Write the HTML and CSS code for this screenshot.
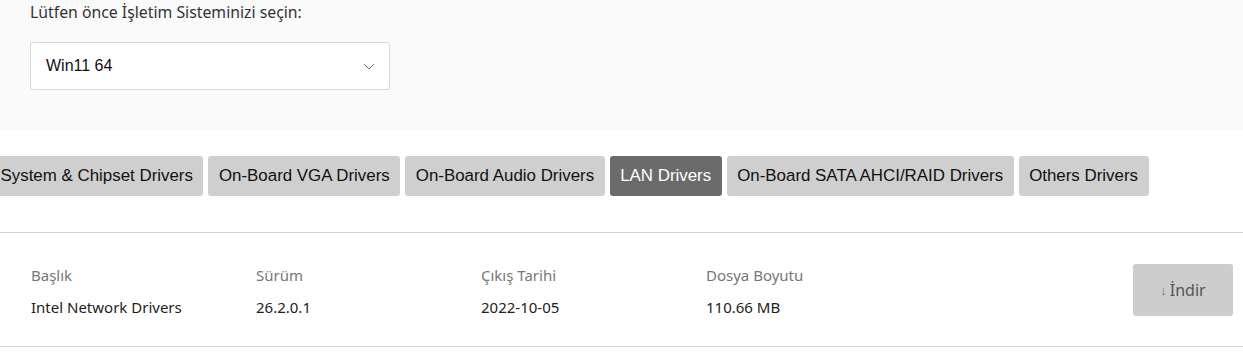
FILE: index.html
```html
<!DOCTYPE html>
<html lang="tr">
<head>
<meta charset="utf-8">
<link rel="stylesheet" href="styles.css">
</head>
<body>
<section class="os">
  <div class="os-label">Lütfen önce İşletim Sisteminizi seçin:</div>
  <div class="select">
    <span>Win11 64</span>
    <svg class="chev" width="12" height="7" viewBox="0 0 12 7"><path d="M1 1 L6 6 L11 1" fill="none" stroke="#777" stroke-width="1"/></svg>
  </div>
</section>
<nav class="tabs">
  <div class="tab">System &amp; Chipset Drivers</div>
  <div class="tab">On-Board VGA Drivers</div>
  <div class="tab">On-Board Audio Drivers</div>
  <div class="tab active">LAN Drivers</div>
  <div class="tab">On-Board SATA AHCI/RAID Drivers</div>
  <div class="tab">Others Drivers</div>
</nav>
<div class="list">
  <div class="row">
    <div class="col"><div class="h">Başlık</div><div class="v">Intel Network Drivers</div></div>
    <div class="col"><div class="h">Sürüm</div><div class="v">26.2.0.1</div></div>
    <div class="col"><div class="h">Çıkış Tarihi</div><div class="v">2022-10-05</div></div>
    <div class="col"><div class="h">Dosya Boyutu</div><div class="v">110.66 MB</div></div>
    <div class="spacer"></div>
    <button class="dl"><span class="arr">↓</span>İndir</button>
  </div>
</div>
</body>
</html>
```
FILE: styles.css
```css
html, body { margin: 0; padding: 0; background: #fff; overflow: hidden; }
body { font-family: "Noto Sans", "Open Sans", sans-serif; color: #222; }
.os { background: #fafafa; height: 130px; box-sizing: border-box; padding: 0 30px; }
.os-label { font-size: 15.8px; line-height: 22px; padding-top: 1px; color: #333; }
.select {
  margin-top: 19px; width: 360px; height: 48px; box-sizing: border-box;
  background: #fff; border: 1px solid #d9d9d9; border-radius: 3px;
  display: flex; align-items: center; justify-content: space-between;
  padding: 0 14px 0 15px;
  font-family: "Liberation Sans", Arial, sans-serif; font-size: 16px; color: #111;
}
.chev { margin-top: 1px; }
.tabs { display: flex; gap: 5px; margin: 26px 0 0 -10px; }
.tab {
  height: 40px; line-height: 40px; padding: 0 10.5px; background: #cfcfcf; color: #111;
  border-radius: 3px; font-family: "Liberation Sans", Arial, sans-serif; font-size: 16.9px;
  white-space: nowrap;
}
.tab.active { background: #6b6b6b; color: #fff; }
.list { margin-top: 36px; border-top: 1px solid #d4d4d4; border-bottom: 1px solid #d4d4d4; }
.row { display: flex; align-items: center; height: 113px; padding: 0 10px 0 31px; }
.col { width: 225px; flex: none; font-size: 15px; }
.h { color: #777; line-height: 20px; margin-top: 2px; }
.v { color: #222; line-height: 20px; margin-top: 12px; }
.spacer { flex: 1; }
.dl {
  width: 100px; height: 52px; border: none; border-radius: 3px; background: #cdcdcd;
  color: #555; font-family: "Noto Sans", sans-serif; font-size: 16px; cursor: pointer;
  display: flex; align-items: center; justify-content: center; padding: 0;
}
.arr { font-size: 13px; margin-right: 3px; color: #777; }
```
